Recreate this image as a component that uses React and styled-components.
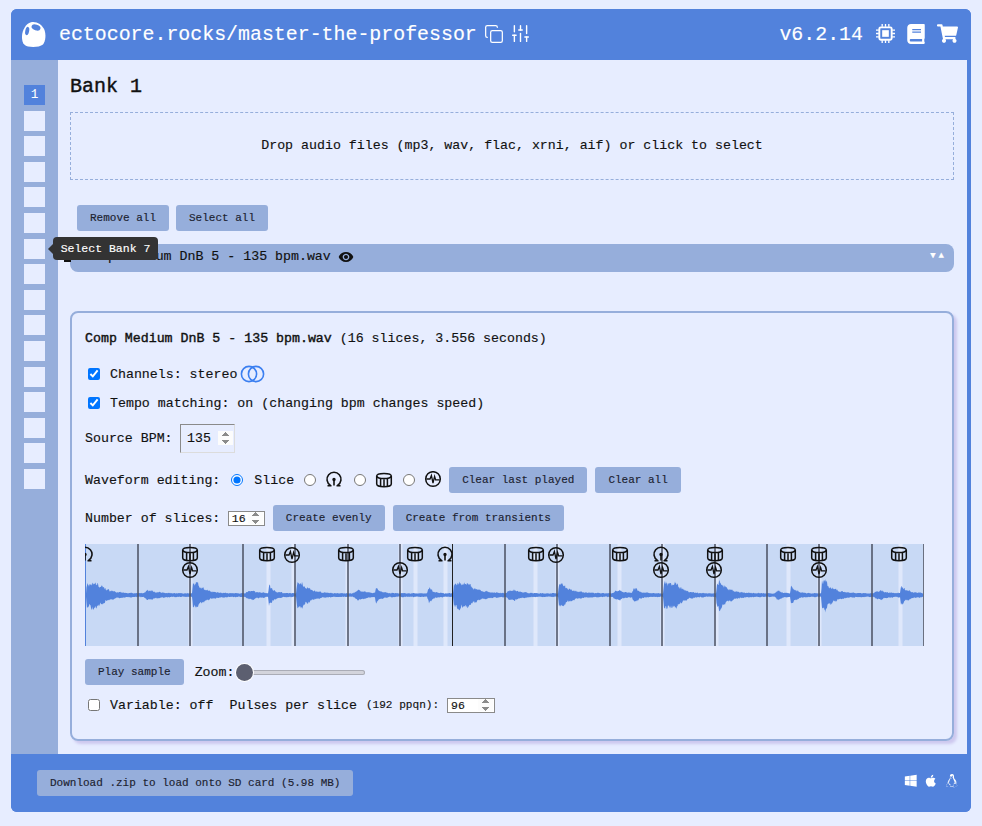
import React from "react";
import styled, { createGlobalStyle } from "styled-components";
import { Copy, SlidersVertical } from "lucide-react";
import { FaBook, FaShoppingCart, FaWindows, FaApple, FaLinux } from "react-icons/fa";
import { MdRemoveRedEye } from "react-icons/md";

const MONO = '"Liberation Mono", "DejaVu Sans Mono", monospace';

const Global = createGlobalStyle`
  html, body { margin: 0; padding: 0; background: #e7edff; height: 826px; overflow: hidden; }
  body { font-family: ${MONO}; font-size: 13.27px; color: #111; -webkit-text-stroke: 0.15px currentColor; }
  * { box-sizing: border-box; }
`;

const Frame = styled.div`
  position: relative;
  margin: 9px 0 0 11px;
  width: 960px;
  height: 803px;
  display: flex;
  flex-direction: column;
  background: #5282dc;
  border-radius: 6px;
  overflow: hidden;
`;
const Header = styled.header`
  height: 51px;
  flex: none;
  display: flex;
  align-items: center;
  padding: 0 13px 0 10px;
  color: #fff;
  background: #5282dc;
`;
const Logo = styled.svg`
  width: 25px;
  height: 27px;
  flex: none;
  margin-top: -1px;
`;
const SiteTitle = styled.div`
  font-size: 19.9px;
  margin-left: 13px;
  white-space: nowrap;
`;
const HeaderIcons = styled.div`
  display: flex;
  align-items: center;
  gap: 6px;
  margin-left: 7px;
  margin-top: -2px;
`;
const Spacer = styled.div`
  flex: 1;
`;
const Version = styled.div`
  font-size: 19.9px;
  margin-right: 13px;
`;
const RightIcons = styled.div`
  display: flex;
  align-items: center;
  gap: 11px;
  margin-top: -2px;
`;
const Middle = styled.div`
  flex: none;
  height: 694px;
  display: flex;
  padding-right: 4px;
`;
const Sidebar = styled.nav`
  width: 47px;
  flex: none;
  background: #96aedb;
  padding: 25px 0 0 13px;
  display: flex;
  flex-direction: column;
  gap: 5.6px;
`;
const BankCell = styled.div`
  width: 21px;
  height: 20px;
  background: ${(p) => (p.$active ? "#5282dc" : "#e7edff")};
  color: #fff;
  font-size: 12px;
  display: flex;
  align-items: center;
  justify-content: center;
`;
const Main = styled.main`
  flex: 1;
  background: #e7edff;
  padding: 15px 13px 0 12px;
`;
const Heading = styled.h1`
  margin: 0;
  font-size: 20px;
  line-height: 24px;
  font-weight: 400;
  -webkit-text-stroke: 0.4px currentColor;
`;
const DropZone = styled.div`
  margin-top: 13px;
  height: 68px;
  padding-bottom: 2px;
  border: 1px dashed #96aedb;
  display: flex;
  align-items: center;
  justify-content: center;
`;
const Actions = styled.div`
  margin-top: 25px;
  padding-left: 7px;
  display: flex;
  gap: 7px;
`;
const Button = styled.button`
  height: 26px;
  padding: 0 13px;
  border: none;
  border-radius: 3px;
  background: #96aedb;
  color: #1c2230;
  font-family: ${MONO};
  font-size: 11px;
  white-space: nowrap;
  -webkit-text-stroke: 0.15px currentColor;
`;
const FileRow = styled.div`
  position: relative;
  margin-top: 13px;
  height: 28px;
  background: #96aedb;
  border-radius: 0 8px 8px 8px;
  display: flex;
  align-items: center;
  padding: 0 7px 3px 14px;
  gap: 7px;
`;
const Handle = styled.span`
  position: absolute;
  left: -6px;
  top: 9px;
  width: 7px;
  height: 9px;
  border-top: 2px solid #111;
  border-bottom: 2px solid #111;
`;
const Arrows = styled.span`
  margin-left: auto;
  color: #fff;
  font-size: 9px;
  letter-spacing: 3px;
  margin-top: -2px;
`;
const Card = styled.section`
  margin-top: 39px;
  height: 430px;
  border: 2px solid #96aedb;
  border-radius: 8px;
  box-shadow: 3px 3px 3px #cdc8ef;
  padding: 15px 13px 0;
  display: flex;
  flex-direction: column;
`;
const Row = styled.div`
  display: flex;
  align-items: center;
  margin-top: ${(p) => p.$top || 0}px;
  min-height: ${(p) => p.$h || 20}px;
  white-space: nowrap;
`;
const Strong = styled.span`
  -webkit-text-stroke: 0.4px currentColor;
  margin-right: 8px;
`;
const Check = styled.input.attrs({ type: "checkbox" })`
  margin: 0 10px 0 3px;
  width: 12px;
  height: 12px;
`;
const Radio = styled.input.attrs({ type: "radio", name: "edit" })`
  margin: 0 ${(p) => p.$after}px 0 ${(p) => p.$before}px;
  width: 12px;
  height: 12px;
`;
const NumberInput = styled.input.attrs({ type: "number" })`
  width: ${(p) => p.$w}px;
  height: ${(p) => p.$h}px;
  margin-left: ${(p) => p.$left}px;
  padding: 0 1px 0 ${(p) => p.$pad}px;
  font-family: ${MONO};
  font-size: ${(p) => p.$size}px;
  color: #111;
  background: ${(p) => (p.$white ? "#fff" : "transparent")};
  border-style: solid;
  border-width: 1px;
  border-color: ${(p) => (p.$white ? "#8a8a8a" : "#8a8a8a #dcdcdc #dcdcdc #8a8a8a")};
  &::-webkit-inner-spin-button {
    opacity: 1;
  }
`;
const Small = styled.span`
  font-size: 11.1px;
  margin: 0 0 0 9px;
`;
const Gap = styled.span`
  display: inline-block;
  width: ${(p) => p.$w}px;
`;
const TightButtons = styled.div`
  display: flex;
  gap: ${(p) => p.$gap}px;
  margin-left: ${(p) => p.$left}px;
`;
const WaveSvg = styled.svg`
  display: block;
  width: 839px;
  height: 102px;
  margin-top: 13px;
  flex: none;
`;
const IconSvg = styled.svg`
  width: 18px;
  height: 18px;
  flex: none;
`;
const Range = styled.input.attrs({ type: "range", defaultValue: 0 })`
  -webkit-appearance: none;
  appearance: none;
  width: 129px;
  height: 5px;
  margin: 0 0 0 2px;
  border-radius: 3px;
  background: #d3d4dc;
  box-shadow: inset 0 0 0 1px #aaacb6;
  &::-webkit-slider-thumb {
    -webkit-appearance: none;
    width: 17px;
    height: 17px;
    border-radius: 50%;
    background: #5c5f70;
    box-shadow: 0 0 0 1px #fff;
  }
`;
const Footer = styled.footer`
  flex: none;
  height: 58px;
  display: flex;
  align-items: center;
  padding: 0 13px 0 26px;
  background: #5282dc;
`;
const OsIcons = styled.div`
  margin-left: auto;
  margin-top: -4px;
  display: flex;
  align-items: center;
  gap: 6.7px;
  color: #fff;
`;
const Tooltip = styled.div`
  position: absolute;
  left: 42px;
  top: 228px;
  width: 105px;
  height: 23px;
  background: #333;
  color: #fff;
  border-radius: 4px;
  font-size: 11.5px;
  display: flex;
  align-items: center;
  justify-content: center;
  &::before {
    content: "";
    position: absolute;
    left: -5px;
    top: 7px;
    border-style: solid;
    border-width: 5px 5px 5px 0;
    border-color: transparent #333 transparent transparent;
  }
`;

/* Marker glyphs, drawn around their centre */
const Omega = ({ x = 9, y = 9 }) => (
  <g transform={`translate(${x} ${y})`} fill="none" stroke="#111" strokeWidth="1.6">
    <path d="M-3.6 6.2 A7 7 0 1 1 3.6 6.2" />
    <path d="M-6.5 6.8 H-2.5 M2.5 6.8 H6.5" />
    <path d="M0 0.5 V6.5" />
    <circle cx="0" cy="0.5" r="0.9" fill="#111" />
  </g>
);
const Drum = ({ x = 9, y = 9 }) => (
  <g transform={`translate(${x} ${y})`} fill="none" stroke="#111" strokeWidth="1.5">
    <ellipse cx="0" cy="-4" rx="7.3" ry="2.6" />
    <path d="M-7.3 -4 V4 A7.3 2.8 0 0 0 7.3 4 V-4" />
    <path d="M-3.4 -1 V6 M0 -.8 V6.6 M3.4 -1 V6" />
  </g>
);
const Pulse = ({ x = 9, y = 9 }) => (
  <g transform={`translate(${x} ${y})`} fill="none" stroke="#111" strokeWidth="1.5">
    <circle r="7.3" />
    <path d="M-6.6 0 H-3 L-1.6 -3.6 L0 4 L1.6 -2.6 L2.6 0.8 H6.6" strokeWidth="1.3" />
  </g>
);

const slices = [138, 190, 243, 295, 348, 400, 505, 557, 610, 662, 715, 767, 819, 872];
const bands = [190, 268, 293, 347, 400, 415, 445, 535, 557, 619, 662, 716, 788, 819, 900];
const row1 = [
  ["o", 85], ["d", 190], ["d", 267], ["p", 292], ["d", 346], ["d", 415], ["o", 445], ["d", 536],
  ["p", 556], ["d", 620], ["o", 661], ["d", 715], ["d", 788], ["d", 819], ["d", 899],
];
const row2 = [190, 400, 661, 714, 819];
// x, amplitude, decay, plateau and attack of each hit in the sample
const hits = [
  [86, 13, 10, 12, 1], [143, 3.5, 8, 8, 4], [192, 13, 9, 5, 1], [245, 3, 8, 8, 4], [268, 10, 5, 1, 1], [296, 13, 9, 6, 1],
  [353, 3.5, 7, 8, 4], [375, 7, 5, 1, 1], [427, 10, 4, 1, 2], [453, 13, 11, 14, 1], [506, 4, 8, 8, 4], [558, 12, 10, 4, 1],
  [612, 3.5, 7, 8, 4], [632, 9, 5, 1, 2], [663, 13, 7, 14, 1], [716, 15, 9, 4, 1], [775, 4, 4, 3, 3], [790, 10, 5, 1, 1],
  [821, 16, 9, 4, 1], [873, 3, 8, 8, 4], [900, 10, 7, 1, 1],
];
function wavePath() {
  let seed = 17;
  const rnd = () => {
    seed = (seed * 16807) % 2147483647;
    return seed / 2147483647;
  };
  const top = [];
  const bottom = [];
  for (let x = 86; x <= 924; x += 0.5) {
    let amp = 2.2;
    hits.forEach(([h, a, d, p, att]) => {
      if (x >= h) {
        const rise = Math.min(1, (x - h) / att);
        amp += a * rise * Math.exp(-Math.max(0, x - h - p) / d);
      }
    });
    const lobe = 0.88 + 0.12 * Math.sin(x * 0.9) * Math.sin(x * 0.23);
    top.push(`${x - 85} ${(51 - amp * lobe * (0.68 + rnd() * 0.3)).toFixed(1)}`);
    bottom.unshift(`${x - 85} ${(51 + amp * lobe * (0.75 + rnd() * 0.3)).toFixed(1)}`);
  }
  return "M" + top.concat(bottom).join("L") + "Z";
}
const wave = wavePath();

const Waveform = () => (
  <WaveSvg viewBox="0 0 839 102">
    <rect width="839" height="102" fill="#c8d9f5" />
    {bands.map((b) => (
      <rect key={b} x={b - 85 - 1.5} y="0" width="4" height="102" fill="#dfe8fb" />
    ))}
    <path d={wave} fill="#5282dc" />
    {slices.map((s) => (
      <rect key={s} x={s - 85 - 1} y="0" width="2" height="102" fill="#4e5567" opacity="0.78" />
    ))}
    <rect x="0" width="1" height="102" fill="#5282dc" />
    <rect x="367" width="1" height="102" fill="#222" />
    <rect x="838" width="1" height="102" fill="#6a7080" />
    {row1.map(([k, x]) => {
      const cx = x - 85;
      if (k === "o") return <Omega key={x} x={cx} y={10} />;
      if (k === "d") return <Drum key={x} x={cx} y={10} />;
      return <Pulse key={x} x={cx} y={11} />;
    })}
    {row2.map((x) => (
      <Pulse key={x} x={x - 85} y={26} />
    ))}
  </WaveSvg>
);

export default function App() {
  return (
    <>
      <Global />
      <Frame>
        <Header>
          <Logo viewBox="0 0 25 27">
            <path
              d="M10 1.2C15 0 21 3 23.5 9C25 13 24.8 20 22 23.5C19 26 12 26.5 7 25.5C2.5 24.5 0.8 21 1 15C1.2 9 5 2.5 10 1.2Z"
              fill="#fff"
            />
            <ellipse cx="6.2" cy="10" rx="1.9" ry="4.2" transform="rotate(12 6.2 10)" fill="#5282dc" />
            <ellipse cx="15" cy="6.5" rx="4.6" ry="2.8" transform="rotate(18 15 6.5)" fill="#5282dc" />
          </Logo>
          <SiteTitle>ectocore.rocks/master-the-professor</SiteTitle>
          <HeaderIcons>
            <Copy size={20} strokeWidth={1.5} />
            <SlidersVertical size={21} strokeWidth={1.6} />
          </HeaderIcons>
          <Spacer />
          <Version>v6.2.14</Version>
          <RightIcons>
            <svg width="19" height="19" viewBox="0 0 20 20" fill="none" stroke="#fff">
              <rect x="3.5" y="3.5" width="13" height="13" rx="1.5" strokeWidth="2" />
              <rect x="6.5" y="6.5" width="7" height="7" fill="#fff" strokeWidth="0" />
              <path
                d="M6.5 0V3M10 0V3M13.5 0V3M6.5 17V20M10 17V20M13.5 17V20M0 6.5H3M0 10H3M0 13.5H3M17 6.5H20M17 10H20M17 13.5H20"
                strokeWidth="1.4"
              />
            </svg>
            <FaBook size={20} />
            <FaShoppingCart size={21} />
          </RightIcons>
        </Header>
        <Middle>
          <Sidebar>
            {Array.from({ length: 16 }, (_, i) => (
              <BankCell key={i} $active={i === 0}>
                {i === 0 ? "1" : ""}
              </BankCell>
            ))}
          </Sidebar>
          <Main>
            <Heading>Bank 1</Heading>
            <DropZone>Drop audio files (mp3, wav, flac, xrni, aif) or click to select</DropZone>
            <Actions>
              <Button>Remove all</Button>
              <Button>Select all</Button>
            </Actions>
            <FileRow>
              <Handle />
              <span>Comp Medium DnB 5 - 135 bpm.wav</span>
              <MdRemoveRedEye size={16} />
              <Arrows>▼▲</Arrows>
            </FileRow>
            <Card>
              <Row>
                <Strong>Comp Medium DnB 5 - 135 bpm.wav</Strong>
                <span>(16 slices, 3.556 seconds)</span>
              </Row>
              <Row $top={16}>
                <Check defaultChecked />
                <span>Channels: stereo</span>
                <svg width="26" height="18" viewBox="0 0 26 18" style={{ marginLeft: 3 }}>
                  <g fill="none" stroke="#3b7ff0" strokeWidth="1.6">
                    <circle cx="9" cy="9" r="7.6" />
                    <circle cx="16" cy="9" r="7.6" />
                  </g>
                </svg>
              </Row>
              <Row $top={9}>
                <Check defaultChecked />
                <span>Tempo matching: on (changing bpm changes speed)</span>
              </Row>
              <Row $top={11} $h={29}>
                <span>Source BPM:</span>
                <NumberInput defaultValue={135} $w={55} $h={29} $left={7.5} $pad={6} $size={13.2} />
              </Row>
              <Row $top={14} $h={26}>
                <span>Waveform editing:</span>
                <Radio defaultChecked $before={11} $after={11} />
                <span>Slice</span>
                <Radio $before={10} $after={9} />
                <IconSvg viewBox="0 0 18 18"><Omega y={8} /></IconSvg>
                <Radio $before={11} $after={9} />
                <IconSvg viewBox="0 0 18 18"><Drum /></IconSvg>
                <Radio $before={10} $after={9} />
                <IconSvg viewBox="0 0 18 18"><Pulse y={8} /></IconSvg>
                <TightButtons $gap={8} $left={7}>
                  <Button>Clear last played</Button>
                  <Button>Clear all</Button>
                </TightButtons>
              </Row>
              <Row $top={12} $h={26}>
                <span>Number of slices:</span>
                <NumberInput defaultValue={16} $white $w={37} $h={15} $left={7.5} $pad={3} $size={11.5} />
                <TightButtons $gap={8} $left={8}>
                  <Button>Create evenly</Button>
                  <Button>Create from transients</Button>
                </TightButtons>
              </Row>
              <Waveform />
              <Row $top={13} $h={26}>
                <Button>Play sample</Button>
                <Gap $w={11} />
                <span>Zoom:</span>
                <Range />
              </Row>
              <Row $top={10}>
                <Check />
                <span>Variable: off</span>
                <Gap $w={16} />
                <span>Pulses per slice</span>
                <Small>(192 ppqn):</Small>
                <NumberInput defaultValue={96} $white $w={48} $h={15} $left={8} $pad={3} $size={11.5} />
              </Row>
            </Card>
          </Main>
        </Middle>
        <Footer>
          <Button>Download .zip to load onto SD card (5.98 MB)</Button>
          <OsIcons>
            <FaWindows size={13.5} />
            <FaApple size={13.5} />
            <FaLinux size={13.5} />
          </OsIcons>
        </Footer>
        <Tooltip>Select Bank 7</Tooltip>
      </Frame>
    </>
  );
}
